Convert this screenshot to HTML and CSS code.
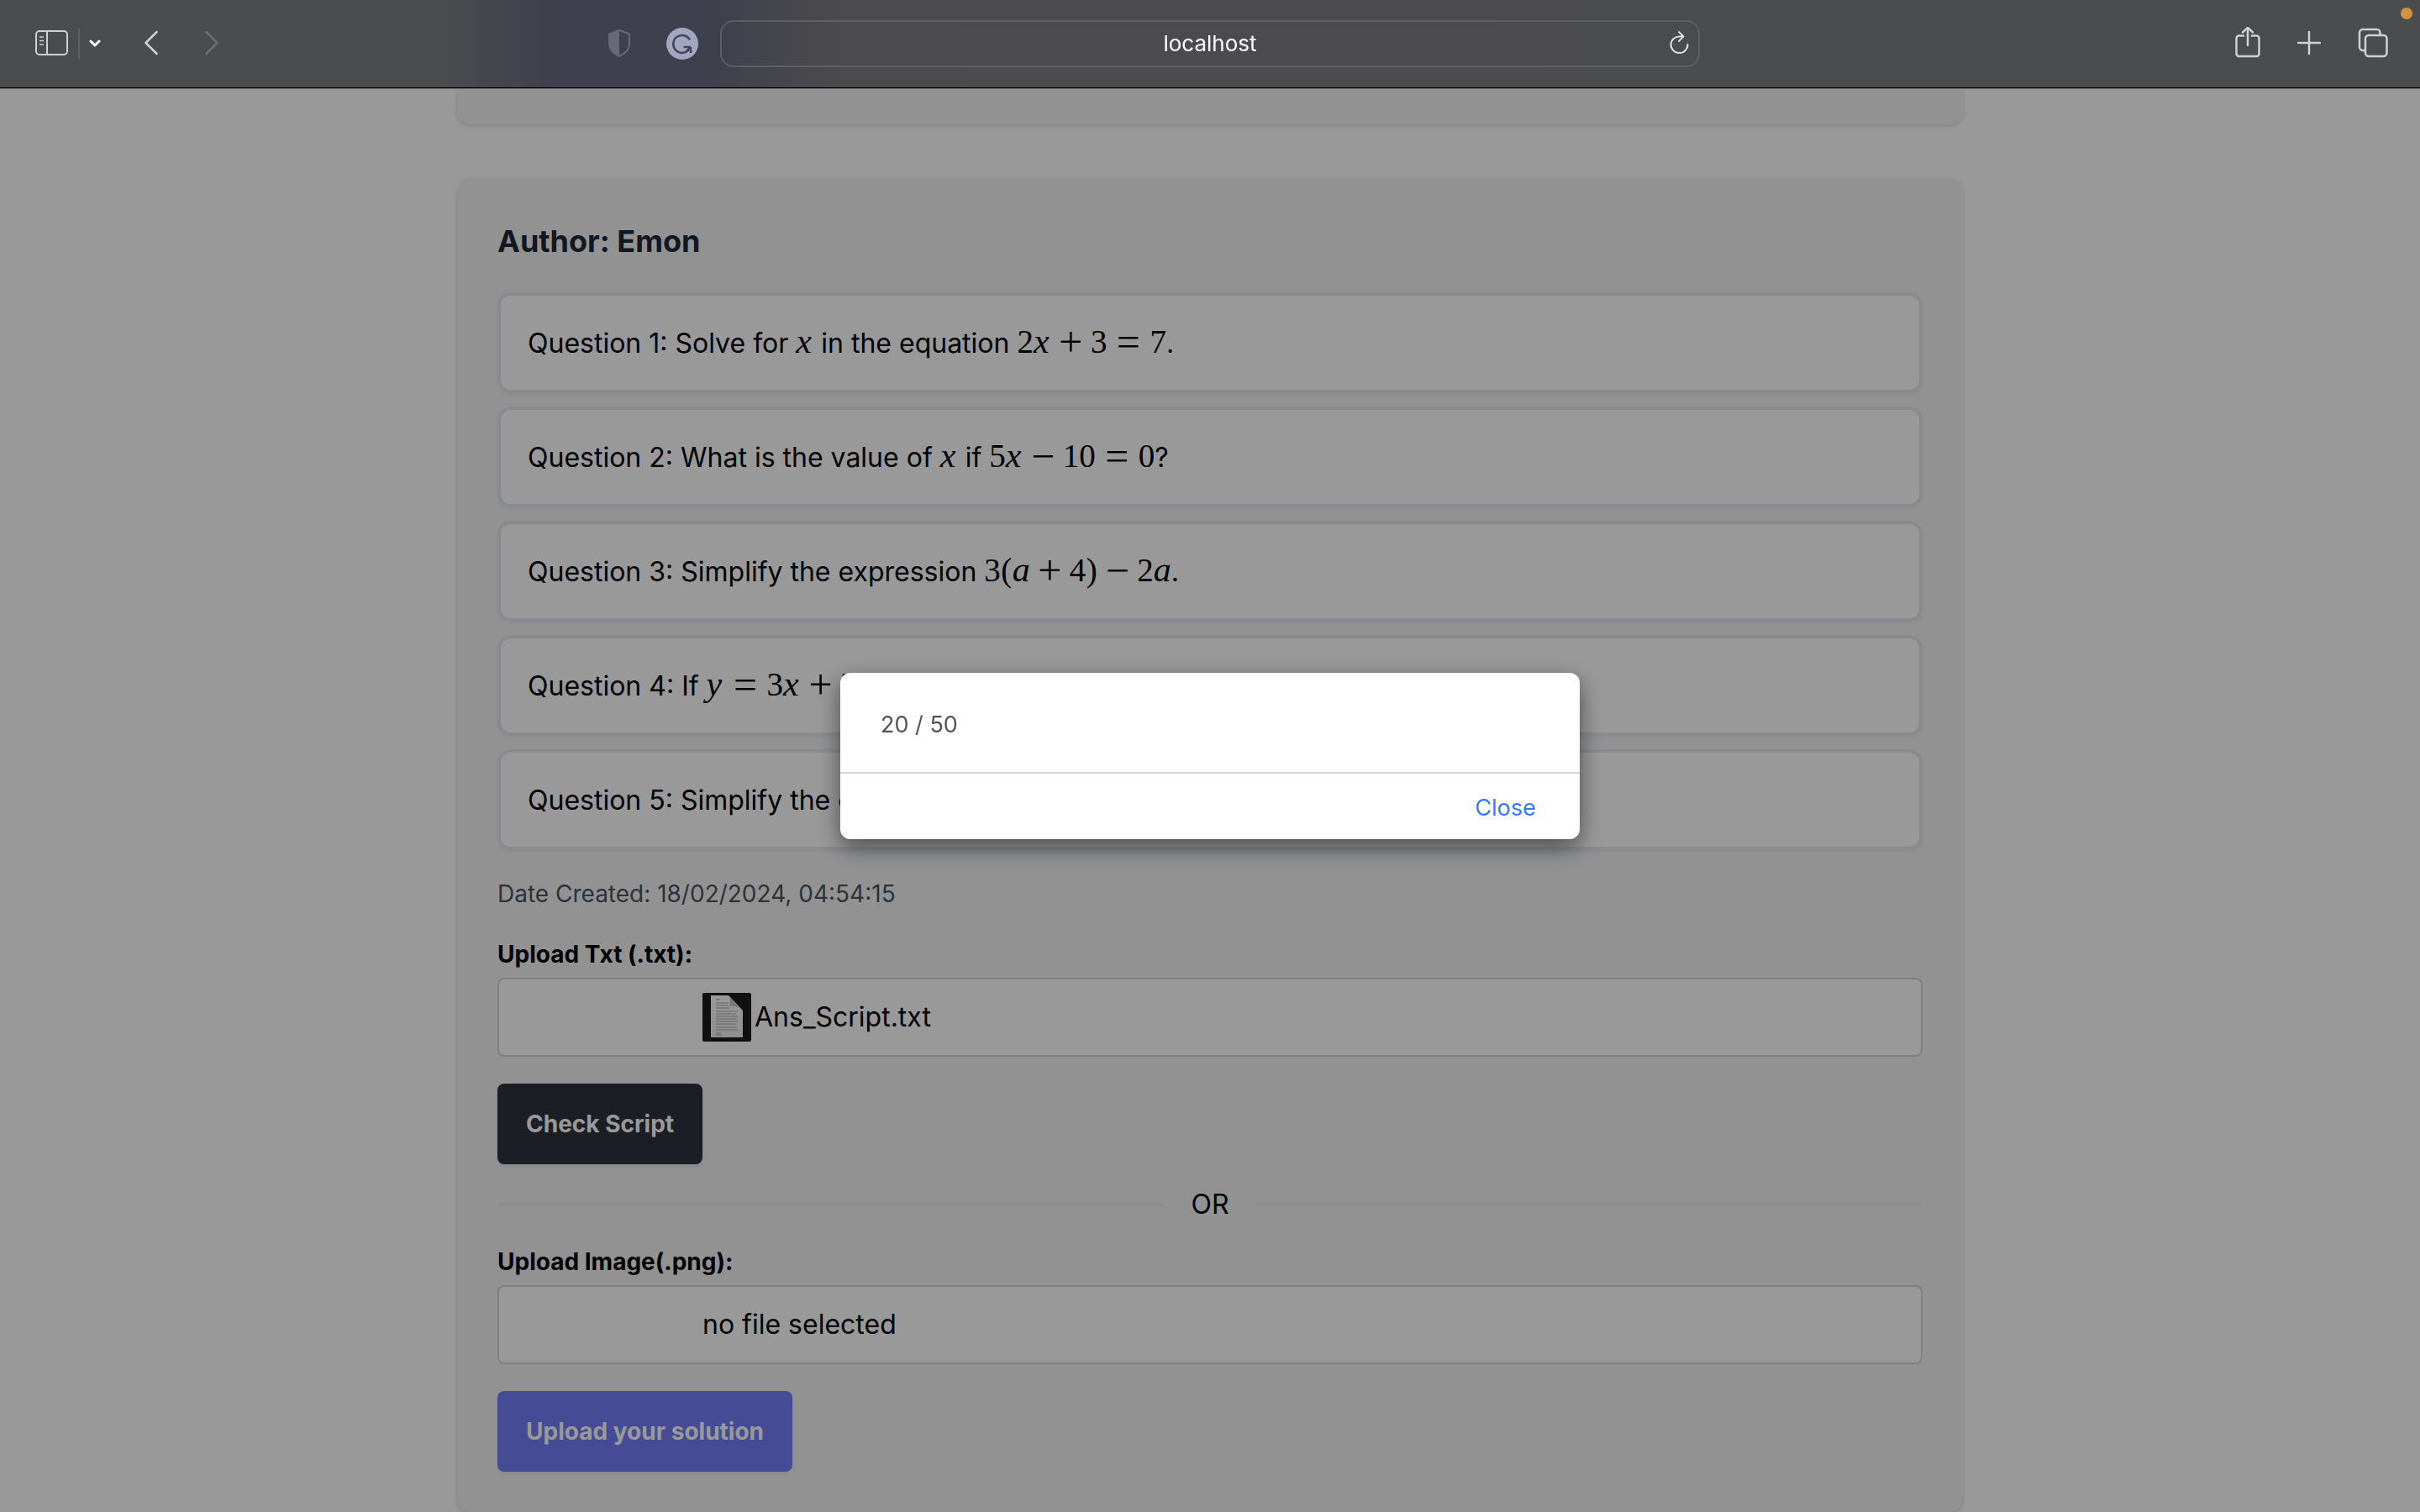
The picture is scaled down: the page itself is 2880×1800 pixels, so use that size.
FILE: index.html
```
<!DOCTYPE html>
<html lang="en">
<head>
<meta charset="utf-8">
<meta name="viewport" content="width=device-width, initial-scale=1">
<title>localhost</title>
<link rel="stylesheet" href="styles.css">
</head>
<body>
<header class="toolbar">
  <div class="tools tools-start">
    <button class="tool" aria-label="Sidebar"><svg width="40" height="40" fill="none" stroke="#cfd0d1" stroke-width="2"><rect x="1" y="5" width="37" height="28" rx="4"/><path d="M14 5v28"/><path d="M5 12h5M5 16.500h5M5 21h5" stroke-width="1.500"/></svg></button>
    <span class="divider"></span>
    <button class="tool tool-menu" aria-label="Sidebar menu"><svg width="14" height="40" fill="none" stroke="#fff" stroke-width="3" stroke-linecap="round" stroke-linejoin="round"><path d="M2 17l5 5 5-5"/></svg></button>
    <button class="tool tool-back" aria-label="Back"><svg width="16" height="40" fill="none" stroke="#cfd0d1" stroke-width="2.500" stroke-linecap="round" stroke-linejoin="round"><path d="M14.500 6L1.500 19l13 13"/></svg></button>
    <button class="tool tool-forward" aria-label="Forward"><svg width="16" height="40" fill="none" stroke="#6d6e70" stroke-width="2.500" stroke-linecap="round" stroke-linejoin="round"><path d="M1.500 6l13 13-13 13"/></svg></button>
    <div class="extensions">
      <button class="tool" aria-label="Privacy report"><svg width="28" height="40"><path d="M14 4L26 8.500V21c0 7-6 11-12 14C8 32 2 28 2 21V8.500z" fill="none" stroke="#686976" stroke-width="2" stroke-linejoin="round"/><path d="M14 4L2 8.500V21c0 7 6 11 12 14z" fill="#686976"/></svg></button>
      <button class="tool" aria-label="Writing assistant"><svg width="38" height="40"><circle cx="19" cy="20" r="19" fill="#a2a6bf"/><path d="M28 15.500A10.500 10.500 0 1 0 26.500 27.500M20.500 24H29M29 24v7M29 24l-6 6" fill="none" stroke="#44465a" stroke-width="2.500"/></svg></button>
    </div>
  </div>
  <div class="address">
    <span class="address-text">localhost</span>
    <button class="tool reload" aria-label="Reload"><svg width="24" height="40" fill="none" stroke="#dedfdf" stroke-width="2" stroke-linecap="round" stroke-linejoin="round"><path d="M21.500 21A10 9.800 0 1 1 12 11.500L16.500 11.500M11 6l5.500 5.500L11 17"/></svg></button>
  </div>
  <div class="tools tools-end">
    <button class="tool" aria-label="Share"><svg width="30" height="40" fill="none" stroke="#cfd0d1" stroke-width="2.500" stroke-linecap="round" stroke-linejoin="round"><path d="M10 10.500H4.500a3 3 0 0 0-3 3V32a3 3 0 0 0 3 3h21a3 3 0 0 0 3-3V13.500a3 3 0 0 0-3-3H20M15 22V1M9 6.500L15 .800l6 5.700"/></svg></button>
    <button class="tool" aria-label="New tab"><svg width="28" height="40" fill="none" stroke="#cfd0d1" stroke-width="2.500" stroke-linecap="round"><path d="M14 6v26M1 19h26"/></svg></button>
    <button class="tool" aria-label="Tab overview"><svg width="36" height="40" fill="none" stroke="#cfd0d1" stroke-width="2.500" stroke-linejoin="round"><rect x="9" y="10" width="25.500" height="25" rx="4"/><path d="M9 28H6a4 4 0 0 1-4-4V7a4 4 0 0 1 4-4h16.500a4 4 0 0 1 4 4v3"/></svg></button>
  </div>
  <span class="mic-dot"></span>
</header>

<main class="page">
  <section class="card card-previous"></section>
  <section class="card">
    <h2 class="card-title">Author: Emon</h2>
    <ul class="questions">
      <li class="question">Question 1: Solve for <span class="math"><i class="var">x</i></span> in the equation <span class="math">2<i class="var">x</i><span class="op">+</span>3<span class="op rel">=</span>7</span>.</li>
      <li class="question">Question 2: What is the value of <span class="math"><i class="var">x</i></span> if <span class="math">5<i class="var">x</i><span class="op">−</span>10<span class="op rel">=</span>0</span>?</li>
      <li class="question">Question 3: Simplify the expression <span class="math">3<span class="paren">(</span><i class="var">a</i><span class="op">+</span>4<span class="paren">)</span><span class="op">−</span>2<i class="var">a</i></span>.</li>
      <li class="question">Question 4: If <span class="math"><i class="var">y</i><span class="op rel">=</span>3<i class="var">x</i><span class="op">+</span>2</span></li>
      <li class="question">Question 5: Simplify the expression</li>
    </ul>
    <p class="date">Date Created: 18/02/2024, 04:54:15</p>
    <form class="upload">
      <label class="label" for="txt-file">Upload Txt (.txt):</label>
      <div class="file-box">
        <svg class="file-icon" width="58" height="58"><defs><linearGradient id="paper" x1="0" y1="0" x2="0" y2="1"><stop offset="0" stop-color="#fff"/><stop offset="1" stop-color="#eee"/></linearGradient></defs><rect width="58" height="58" rx="2" fill="#1c1c1c"/><path d="M10 3h21l17 18v32H10z" fill="url(#paper)"/><path d="M31 3c3 3 2 8 1 13 6-1 12 0 16 5z" fill="#ccc"/><path d="M16 8h5M16 12h15M16 15h14M16 18h16M16 22h26M16 25h24M16 28h26M16 31h25M16 34h26M16 37h24M16 41h25M16 44h26M16 48h6M16 50h8" stroke="#aaa" stroke-width="1"/></svg>
        <span>Ans_Script.txt</span>
        <input class="file-input" id="txt-file" type="file" accept=".txt">
      </div>
      <button class="button button-dark" type="button">Check Script</button>
    </form>
    <div class="separator">OR</div>
    <form class="upload">
      <label class="label" for="image-file">Upload Image(.png):</label>
      <div class="file-box">
        <span>no file selected</span>
        <input class="file-input" id="image-file" type="file" accept=".png">
      </div>
      <button class="button button-primary" type="button">Upload your solution</button>
    </form>
  </section>
</main>

<div class="backdrop">
  <div class="modal" role="dialog" aria-modal="true" aria-label="Score">
    <p class="modal-body">20 / 50</p>
    <div class="modal-footer"><button class="modal-close" type="button">Close</button></div>
  </div>
</div>
</body>
</html>
```
FILE: styles.css
```
* { box-sizing: border-box; margin: 0; padding: 0; }

body {
  background: #fff;
  color: #000;
  font: 32px/48px Inter, "Liberation Sans", sans-serif;
}

button { border: 0; background: none; font: inherit; cursor: pointer; }

/* Browser toolbar */
.toolbar {
  position: relative;
  z-index: 2;
  display: grid;
  grid-template-columns: 1fr 40.5% 1fr;
  align-items: center;
  height: 105px;
  border-bottom: 1px solid #000;
  box-shadow: 0 1px 0 #6b6b6b;
  background: linear-gradient(90deg, #4b4c4e 18%, #3f3f4d 23%, #3f3f4d 29%, #4b4b4d 35%, #4b4c4e);
}
.tools { display: flex; align-items: center; }
.tools-start { padding: 0 26px 0 42px; }
.tools-end { justify-content: flex-end; gap: 44px; padding-right: 38px; }
.tool { display: flex; }
.tool svg { display: block; }
.divider { width: 2px; height: 36px; margin: 0 11px; background: #5f6062; }
.tool-back { margin-left: 52px; }
.tool-forward { margin-left: 56px; }
.extensions { display: flex; gap: 42px; margin-left: auto; }
.address {
  display: grid;
  grid-template-columns: 1fr auto 1fr;
  align-items: center;
  height: 56px;
  border: 2px solid #5e5f62;
  border-radius: 16px;
}
.address-text { grid-column: 2; color: #fff; font-size: 26px; line-height: 32px; }
.reload { justify-self: end; margin-right: 10px; }
.mic-dot {
  position: absolute;
  top: 9px;
  right: 9px;
  width: 14px;
  height: 14px;
  border-radius: 50%;
  background: #d09343;
}

/* Page */
.page { max-width: 1792px; margin: 0 auto; }
.card {
  padding: 48px;
  border-radius: 16px;
  background: #f3f4f6;
  box-shadow: 0 2px 6px rgba(0, 0, 0, .1), 0 2px 4px rgba(0, 0, 0, .06);
}
.card-previous {
  height: 43px;
  margin-bottom: 64px;
  padding: 0;
  border-radius: 0 0 16px 16px;
}
.card-title {
  margin-bottom: 34px;
  color: #1f2937;
  font-size: 36px;
  font-weight: 700;
  line-height: 54px;
}
.questions { display: grid; gap: 16px; list-style: none; }
.question {
  padding: 33px 32px 31px;
  border: 4px solid #e5e7eb;
  border-radius: 16px;
  background: #fff;
  box-shadow: 0 2px 4px rgba(0, 0, 0, .05);
  white-space: nowrap;
}
.math { font: 39px/40px "Liberation Serif", serif; }
.var { display: inline-block; min-width: 21px; font-size: 42px; line-height: 40px; }
.op {
  display: inline-block;
  width: 47px;
  font-size: 50px;
  line-height: 32px;
  vertical-align: -4px;
  text-align: center;
}
.rel { width: 51px; }
.paren { display: inline-block; width: 14px; text-align: center; }
.date { margin: 32px 0; color: #4b5563; font-size: 28px; line-height: 40px; }
.label { display: block; margin-bottom: 8px; font-size: 28px; font-weight: 700; line-height: 40px; }
.file-box {
  position: relative;
  display: flex;
  align-items: center;
  gap: 4px;
  height: 94px;
  margin-bottom: 32px;
  padding-left: 242px;
  border: 2px solid #d1d5db;
  border-radius: 8px;
  background: #fff;
}
.file-input { position: absolute; inset: 0; width: 100%; opacity: 0; cursor: pointer; }
.button {
  display: block;
  padding: 28px 34px;
  border-radius: 8px;
  box-shadow: 0 2px 4px rgba(0, 0, 0, .08);
  color: #fff;
  font-size: 28px;
  font-weight: 700;
  line-height: 40px;
}
.button-dark { background: #2d323c; }
.button-primary { background: #767dfb; }
.separator { display: flex; align-items: center; gap: 32px; margin: 24px 0; }
.separator::before, .separator::after { flex: 1; height: 4px; background: #eaebed; content: ""; }

/* Score dialog */
.backdrop {
  position: fixed;
  inset: 0;
  z-index: 1;
  display: flex;
  align-items: center;
  justify-content: center;
  background: rgba(0, 0, 0, .4);
}
.modal {
  width: 880px;
  border-radius: 12px;
  background: #fff;
  box-shadow: 0 10px 28px rgba(0, 0, 0, .5);
}
.modal-body { padding: 45px 48px 39px; color: #555; font-size: 27px; line-height: 34px; }
.modal-footer { display: flex; justify-content: flex-end; padding: 22px 52px 18px; border-top: 2px solid #d6d6d6; }
.modal-close { color: #3478f6; font-size: 27px; line-height: 38px; }
```
